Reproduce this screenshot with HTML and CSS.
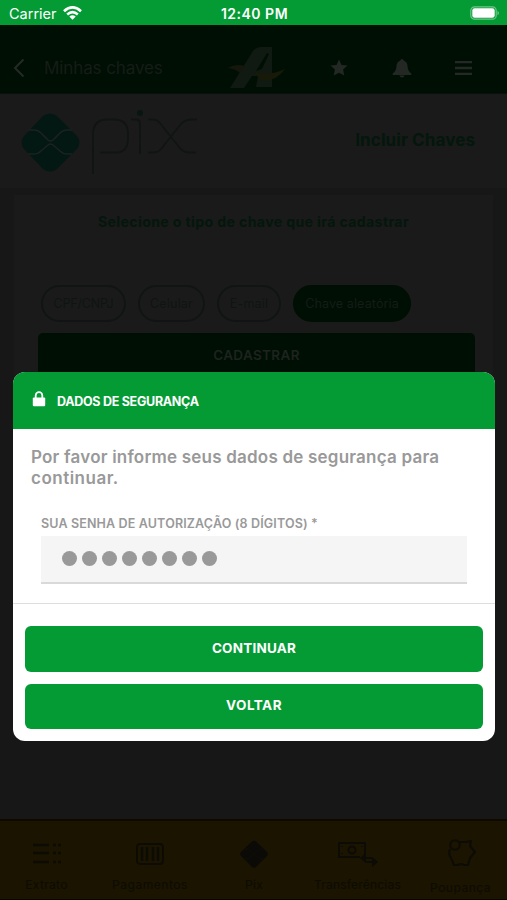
FILE: index.html
```html
<!DOCTYPE html>
<html lang="pt-BR">
<head>
<meta charset="utf-8">
<title>Minhas chaves</title>
<link rel="stylesheet" href="styles.css">
</head>
<body>
<div class="app">
  <div class="status">
    <div class="carrier"><span>Carrier</span>
      <svg width="19" height="14" viewBox="0 0 19 14"><g fill="none" stroke="#fff" stroke-width="2.7"><path d="M1 5.2Q9.500-2.300 18 5.200"/><path d="M4.200 8.500Q9.500 3.800 14.800 8.500"/></g><path d="M6.300 10.500Q9.500 7.900 12.700 10.500L9.500 13.800z" fill="#fff"/></svg>
    </div>
    <div class="time">12:40 PM</div>
    <svg class="battery" width="30" height="14" viewBox="0 0 30 14"><rect x=".8" y=".8" width="25.400" height="12.400" rx="3.800" fill="none" stroke="#72c688" stroke-width="1.200"/><rect x="2.300" y="2.300" width="22.400" height="9.400" rx="2.300" fill="#fff"/><path d="M27.500 4.700q3 2.300 0 4.600z" fill="#72c688"/></svg>
  </div>
  <header class="header">
    <svg class="back" width="12" height="20" viewBox="0 0 12 20"><path d="M10.500 1.500L2 10l8.500 8.500" fill="none" stroke="#252926" stroke-width="2"/></svg>
    <span class="page-title">Minhas chaves</span>
    <svg class="brand" width="60" height="44" viewBox="0 0 60 44"><path d="M2 42L25 5Q28 1 33 1H44V41H28L30 30H24L16 42zM28 25L34 23L41 8L39 7z" fill="#101a12" fill-rule="evenodd"/><path d="M0 22Q7 17 17 20L12 27Q8 23 0 22z" fill="#15170d"/><path d="M26 25Q39 31 57 23Q47 37 32 34z" fill="#171a08"/></svg>
    <svg class="star" width="18" height="18" viewBox="0 0 18 18"><path d="M9 .5l2.500 5.400 6 .7-4.400 4 1.200 6L9 13.700l-5.300 2.900 1.200-6-4.400-4 6-.7z" fill="#232824"/></svg>
    <svg class="bell" width="20" height="20" viewBox="0 0 20 20"><path d="M10 1q1.500 0 1.700 1.500Q15.500 4 15.500 8q0 4.500 3.800 7.500v1.500H.7v-1.500Q4.500 12.500 4.500 8q0-4 3.800-5.500Q8.500 1 10 1zM7.500 17.500h5q-.5 2-2.500 2t-2.500-2z" fill="#232824"/></svg>
    <svg class="menu" width="17" height="14" viewBox="0 0 17 14"><path d="M0 1.200h17M0 7h17M0 12.800h17" stroke="#252926" stroke-width="2.300"/></svg>
  </header>
  <section class="hero">
    <svg width="180" height="66" viewBox="0 0 180 66"><path d="M22 5Q29 0 36 5L56 25Q61 31 56 38L36 58Q29 63 22 58L3 38Q-2 31 3 25z" fill="#031713"/><path d="M7 19H13Q17 19 20 22L27 29Q29.500 31 32 29L39 22Q42 19 46 19H51M7 43H13Q17 43 20 40L27 34Q29.500 32 32 34L39 40Q42 43 46 43H51" fill="none" stroke="#1b2220" stroke-width="1.600"/><g fill="none" stroke="#101413" stroke-width="1.800"><path d="M72 63V24Q72 8.500 86 8.500H93Q107 8.500 107 23V27Q107 41.500 95 41.500H79"/><path d="M110 8.500H115Q119 8.500 119 13V43M127 8.500H132Q136 8.500 139 12L158 36Q162 41.500 168 41.500H175M127 41.500H133Q137 41.500 140 38L160 13Q164 8.500 171 8.500H176"/></g><circle cx="119" cy="2" r="3" fill="#071612"/></svg>
    <h1>Incluir Chaves</h1>
  </section>
  <main class="content">
    <div class="card">
      <h2>Selecione o tipo de chave que irá cadastrar</h2>
      <div class="pills"><span class="pill cpf">CPF/CNPJ</span><span class="pill cell">Celular</span><span class="pill mail">E-mail</span><span class="pill random">Chave aleatória</span></div>
      <div class="register">CADASTRAR</div>
    </div>
  </main>
  <nav class="tabs">
    <div class="tab"><svg width="30" height="26" viewBox="0 0 30 26"><path d="M1 4h16M1 12h16M1 21h16M21 4h3M26 4h3M21 12h3M26 12h3M21 21h3M26 21h3" stroke="#0d0b05" stroke-width="2.400"/></svg><span>Extrato</span></div>
    <div class="tab payments"><svg width="30" height="26" viewBox="0 0 30 26"><rect x="2" y="3" width="26" height="20" rx="3" fill="none" stroke="#0d0b05" stroke-width="1.800"/><path d="M7 6v14M12 6v14M18 6v14M23 6v14" stroke="#0d0b05" stroke-width="2.500"/></svg><span>Pagamentos</span></div>
    <div class="tab"><svg width="30" height="28" viewBox="0 0 30 28"><path d="M13 1.500q2-1.500 4 0l11 10.500q1.500 2 0 4L17 27q-2 1.500-4 0L2 16q-1.500-2 0-4z" fill="#0b0a07"/><path d="M5 9h4l6 5 6-5h4M5 19h4l6-5 6 5h4" fill="none" stroke="#100e07"/></svg><span>Pix</span></div>
    <div class="tab transfers"><svg width="42" height="28" viewBox="0 0 42 28"><g fill="none" stroke="#0d0b05" stroke-width="2"><path d="M23 17H2V3h26v12"/><circle cx="15" cy="10" r="3.500"/><path d="M5 6v1M5 13v1M25 6v1"/><path d="M25 18h10M29 22h9"/></g><path d="M29 13v10l-6-5zM35 17v10l6-5z" fill="#0d0b05"/></svg><span>Transferências</span></div>
    <div class="tab savings"><svg width="30" height="28" viewBox="0 0 30 28"><g fill="none" stroke="#0d0b05" stroke-width="2" stroke-linejoin="round"><circle cx="8" cy="6" r="4.800"/><path d="M12 3h7l5-1-1 5 5 6-5 6-2 7h-4q-3-2-6 0H7l-3-7q-3-4-1-9"/></g></svg><span>Poupança</span></div>
  </nav>
  <div class="modal" role="dialog" aria-modal="true">
    <div class="modal-head"><svg width="14" height="16" viewBox="0 0 14 16"><path d="M3.700 7V4.500a3.300 3.300 0 0 1 6.600 0V7" fill="none" stroke="#fff" stroke-width="1.800"/><rect x=".8" y="6.500" width="12.400" height="8.700" rx="1" fill="#fff"/></svg><strong>DADOS DE SEGURANÇA</strong></div>
    <div class="modal-body">
      <p><span class="line-one">Por favor informe seus dados de segurança para</span><br><span>continuar.</span></p>
      <div class="field"><div class="label">SUA SENHA DE AUTORIZAÇÃO (8 DÍGITOS) *</div>
        <div class="input"><i></i><i></i><i></i><i></i><i></i><i></i><i></i><i></i></div></div>
    </div>
    <div class="actions"><button>CONTINUAR</button><button class="return">VOLTAR</button></div>
  </div>
</div>
</body>
</html>
```
FILE: styles.css
```css
* { box-sizing: border-box; }
body { margin: 0; font-family: Inter, "Liberation Sans", sans-serif; background: #171717; }
svg { display: block; flex: none; overflow: visible; }
h1, h2, p { margin: 0; }
.app { position: relative; width: 507px; height: 900px; display: flex; flex-direction: column; overflow: hidden; }
.status { height: 25px; background: #049b35; color: #fff; display: grid; grid-template-columns: 1fr auto 1fr; align-items: center; padding: 2px 7px 0 9px; }
.carrier { display: flex; align-items: center; gap: 6px; font-size: 14.500px; }
.carrier svg { margin-top: -2px; }
.time { font-size: 14px; font-weight: 600; letter-spacing: .5px; }
.battery { justify-self: end; margin-top: -2px; }
.header { height: 69px; background: #000f04; display: flex; align-items: center; padding: 18px 33px 0 13px; border-bottom: 1px solid #0b100c; }
.page-title { width: 165px; margin-left: 19px; color: #161c17; font-size: 17px; letter-spacing: -.1px; white-space: nowrap; }
.brand { margin-left: 19px; }
.star { margin-left: 42px; }
.bell { margin-left: 44px; }
.menu { margin-left: 43px; }
.hero { height: 94px; background: #1a1a1a; display: flex; justify-content: space-between; padding: 17px 32px 0 21px; }
.hero h1 { margin-top: 19px; font-size: 17px; line-height: 21px; letter-spacing: .1px; color: #03170d; white-space: nowrap; }
.content { flex: 1; background: #171717; padding: 7px 14px; }
.card { height: 470px; background: #1a1a1a; padding: 17px 18px 0 24px; }
.card h2 { text-align: center; font-size: 14px; line-height: 20px; letter-spacing: .42px; color: #03170d; white-space: nowrap; margin-left: -6px; }
.pills { display: flex; gap: 12px; margin: 53px 0 0 3px; }
.pill { display: flex; align-items: center; justify-content: center; height: 37px; border: 2px solid #101513; border-radius: 19px; font-size: 12.500px; color: #0f1412; white-space: nowrap; }
.cpf { width: 85px; letter-spacing: -.2px; }
.cell { width: 67px; letter-spacing: .2px; }
.mail { width: 64px; letter-spacing: .2px; }
.random { width: 118px; background: #000f04; border-color: #000f04; color: #141c16; letter-spacing: .12px; }
.register { margin-top: 11px; height: 45px; border-radius: 5px; background: #000f04; color: #1d231e; text-align: center; font-size: 13.500px; font-weight: 600; letter-spacing: .35px; line-height: 44px; }
.tabs { height: 81px; background: #1a1400; border-top: 2px solid #0e0a00; border-bottom: 1px solid #080600; display: grid; grid-template-columns: 93px 114px 94px 113px 93px; padding-top: 19px; }
.tab { display: flex; flex-direction: column; align-items: center; font-size: 12px; letter-spacing: .3px; color: #0d0b05; }
.tab svg { height: 28px; }
.tab span { margin-top: 9px; line-height: 15px; white-space: nowrap; }
.payments { letter-spacing: .55px; }
.transfers { letter-spacing: .2px; }
.savings { letter-spacing: .5px; }
.savings svg { margin: -1px 0 0 3px; }
.savings span { margin-top: 13px; }
.modal { position: absolute; top: 372px; left: 13px; width: 482px; height: 369px; border-radius: 12px; background: #fff; overflow: hidden; }
.modal-head { height: 57px; background: #049b35; color: #fff; display: flex; align-items: center; padding: 0 19px; font-size: 12.500px; }
.modal-head svg { margin-top: -3px; }
.modal-head strong { margin: 2px 0 0 11px; letter-spacing: -.28px; white-space: nowrap; }
.modal-body { height: 175px; padding: 18px; border-bottom: 1px solid #dedede; }
.modal-body p { font-size: 17px; line-height: 21px; font-weight: 600; letter-spacing: .5px; color: #999; white-space: nowrap; }
.modal-body .line-one { letter-spacing: .21px; }
.field { margin: 27px 10px 0; }
.label { color: #999; font-size: 12.500px; line-height: 16px; font-weight: 600; letter-spacing: .15px; white-space: nowrap; }
.input { height: 48px; margin-top: 4px; background: #f5f5f5; border-bottom: 2px solid #d9d9d9; display: flex; align-items: center; gap: 5px; padding: 0 21px 1px; }
.input i { width: 15px; height: 15px; border-radius: 50%; background: #999; }
.actions { display: flex; flex-direction: column; gap: 12px; padding: 22px 12px; }
button { height: 45.500px; border: 0; border-radius: 6px; padding: 0 0 2px; background: #049b35; color: #fff; font: 700 13.500px Inter, "Liberation Sans", sans-serif; letter-spacing: .2px; }
.return { letter-spacing: .5px; }
```
